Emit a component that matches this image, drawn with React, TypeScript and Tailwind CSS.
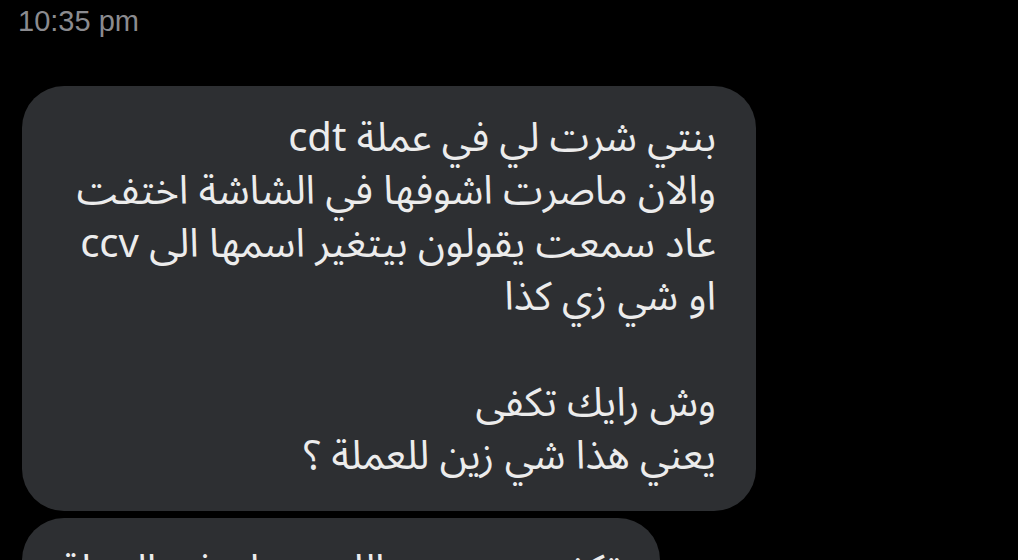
import React from "react";

const arabic = { fontFamily: '"Noto Sans Arabic", "DejaVu Sans", "Noto Sans", sans-serif' };

export default function App() {
  return (
    <div className="h-[560px] w-[1018px] overflow-hidden bg-black">
      <div
        className="pl-[18px] pt-[4px] text-[29px] leading-[34px] text-[#8b8b8f]"
        style={{ fontFamily: '"Liberation Sans", Arial, sans-serif' }}
      >
        10:35 pm
      </div>
      <div className="mt-[48px] ml-[22px] w-[734px] rounded-[42px] bg-[#2d2f32] pt-[26px] pb-[28px] pr-[40px] pl-[30px]">
        <div dir="rtl" className="text-right text-[40px] leading-[53px] text-[#ececec]" style={arabic}>
          <div>بنتي شرت لي في عملة cdt</div>
          <div>والان ماصرت اشوفها في الشاشة اختفت</div>
          <div>عاد سمعت يقولون بيتغير اسمها الى ccv</div>
          <div>او شي زي كذا</div>
          <div>&nbsp;</div>
          <div>وش رايك تكفى</div>
          <div>يعني هذا شي زين للعملة ؟</div>
        </div>
      </div>
      <div className="mt-[7px] ml-[22px] w-[638px] rounded-[42px] bg-[#2d2f32] pt-[26px] pb-[24px] pr-[40px] pl-[30px]">
        <div dir="rtl" className="text-right text-[40px] leading-[53px] text-[#ececec]" style={arabic}>
          <div>تكفى ضروري والله محتاج في العملة</div>
        </div>
      </div>
    </div>
  );
}
